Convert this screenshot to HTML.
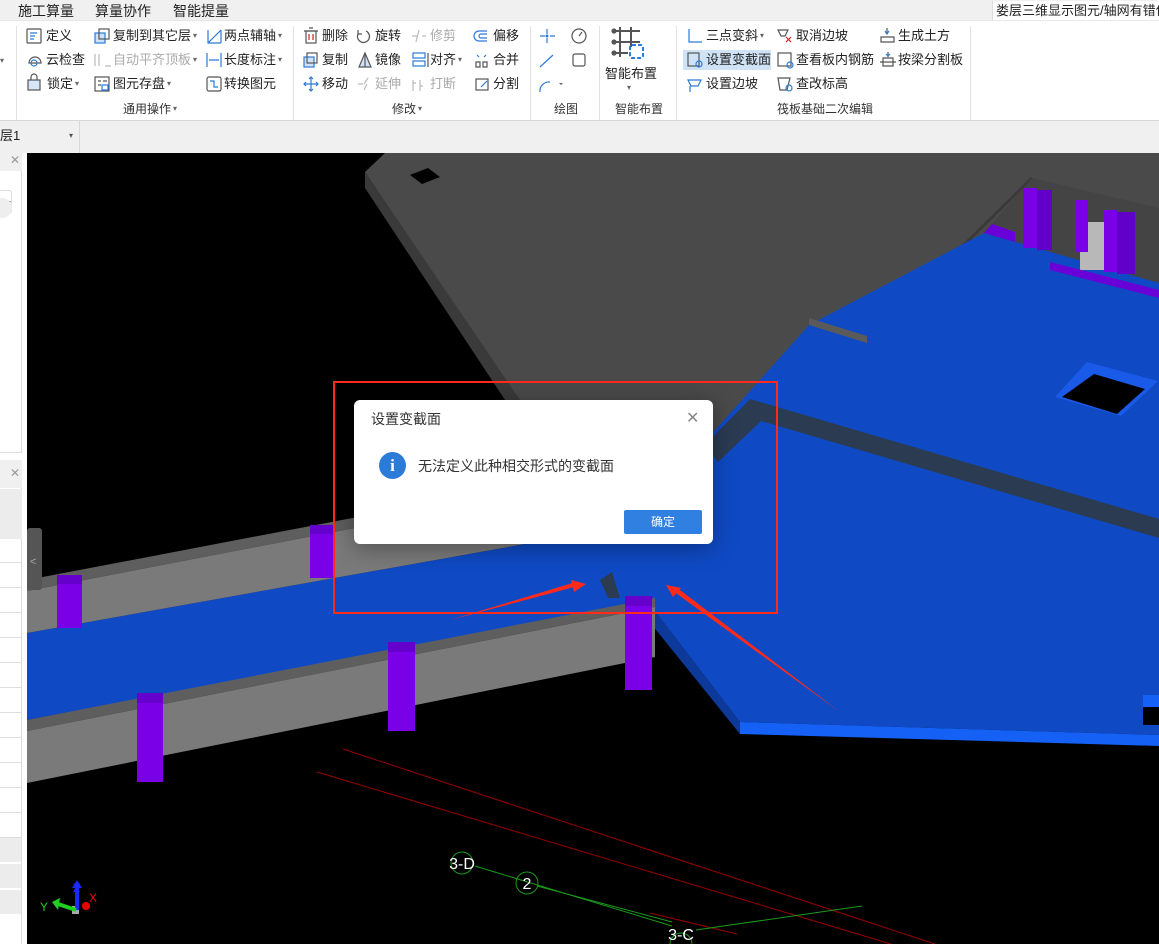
<!DOCTYPE html>
<html style="overflow:hidden"><head><meta charset="utf-8">
<style>
*{margin:0;padding:0;box-sizing:border-box}
html,body{width:1159px;height:944px;overflow:hidden}
body{position:relative;background:#f0f0f0;font-family:"Liberation Sans","Noto Sans CJK SC",sans-serif;color:#222}
.a{position:absolute;white-space:nowrap}
.menu{font-size:14px;top:1px;color:#222}
.rb{position:absolute;left:0;top:20px;width:1159px;height:101px;background:#fff;border-top:1px solid #e8e8e8;border-bottom:1px solid #d8d8d8}
.sep{position:absolute;top:26px;width:1px;height:94px;background:#e2e2e2}
.t{position:absolute;font-size:13px;white-space:nowrap;line-height:16px;color:#222}
.g{color:#aaa}
.gl{position:absolute;top:100px;font-size:12px;color:#333;white-space:nowrap}
.dd{font-size:8px;color:#666;margin-left:2px;vertical-align:2px}
</style></head><body>
<div class="a menu" style="left:18px">施工算量</div>
<div class="a menu" style="left:95px">算量协作</div>
<div class="a menu" style="left:173px">智能提量</div>
<div class="a" style="left:992px;top:1px;height:19px;width:167px;background:#fff;border-left:1px solid #ddd;font-size:13px;padding-left:3px;line-height:19px;overflow:hidden">娄层三维显示图元/轴网有错位,</div>

<div class="rb"></div>
<div class="sep" style="left:16px"></div><div class="sep" style="left:293px"></div><div class="sep" style="left:530px"></div><div class="sep" style="left:599px"></div><div class="sep" style="left:676px"></div><div class="sep" style="left:970px"></div>
<div class="t" style="left:0;top:53px;font-size:8px;color:#666">▾</div>

<svg class="a" style="left:0;top:0" width="1159" height="121">
<g fill="none" stroke="#555" stroke-width="1.2">
<rect x="27" y="29" width="14" height="14" rx="1"/><path d="M30 33h7M30 36h5M30 39h4" stroke="#2a7ad8"/>
<path d="M29 63a6 6 0 0 1 12 0h-12z"/><circle cx="34" cy="63" r="3" stroke="#2a7ad8"/>
<rect x="28" y="80" width="12" height="10" fill="#d6e6fa"/><path d="M31 80v-3a3 3 0 0 1 6 0v3"/>
<rect x="95" y="33" width="10" height="10" fill="#cfe2fa" stroke="#2a7ad8"/><rect x="99" y="29" width="10" height="10"/>
<path d="M95 54v12M99 54v12M105 66h6" stroke="#bbb"/>
<rect x="95" y="77" width="14" height="14"/><path d="M98 81h3M98 85h3M103 81h4" /><rect x="102" y="85" width="6" height="5" stroke="#2a7ad8"/>
<path d="M208 30v13h13M208 43l13-13M221 30v13" stroke="#2a7ad8"/>
<path d="M207 53v14M221 53v14M209 60h10" stroke="#2a7ad8"/>
<rect x="207" y="77" width="14" height="14" rx="2"/><path d="M210 81h4v3M218 87h-4v-3" stroke="#2a7ad8"/>
<rect x="306" y="31" width="10" height="12"/><path d="M304 31h14M309 28h4"/><path d="M309 34v6M313 34v6" stroke="#d02020"/>
<rect x="304" y="57" width="10" height="10" fill="#cfe2fa" stroke="#2a7ad8"/><rect x="307" y="53" width="10" height="10"/>
<path d="M311 77v14M304 84h14M309 79l2-2 2 2M309 89l2 2 2-2M306 82l-2 2 2 2M316 82l2 2-2 2" stroke="#2a7ad8"/>
<path d="M366 31a6 6 0 1 1-8 3M358 30v4h4"/>
<path d="M365 53l-6 14h12z" fill="#cfe2fa"/><path d="M365 53v14"/>
<path d="M358 84h5M364 84l4-6M364 90l3-6" stroke="#bbb"/>
<path d="M412 36h5M419 30l-3 12M422 36h4" stroke="#bbb"/>
<rect x="413" y="53" width="12" height="5" stroke="#2a7ad8"/><rect x="413" y="61" width="12" height="5" stroke="#2a7ad8"/><path d="M428 53v14"/>
<path d="M413 80v11M420 80v11M413 83h3M420 86h3" stroke="#bbb"/>
<path d="M487 31h-8a5 5 0 0 0 0 10h8M487 34h-6a2 2 0 0 0 0 4h6" stroke="#2a7ad8"/>
<path d="M476 62v5h4v-5zM483 62v5h4v-5z"/><path d="M477 55l2 2M486 55l-2 2" stroke="#2a7ad8"/>
<rect x="476" y="79" width="12" height="11"/><path d="M481 87l6-6" stroke="#2a7ad8"/>
<path d="M540 36h5M550 36h5M547 29v5M547 38v5" stroke="#2a7ad8"/><circle cx="547" cy="36" r="1.5" fill="#2a7ad8" stroke="none"/>
<circle cx="579" cy="36" r="7"/><path d="M579 36l3-4"/>
<path d="M540 67l13-12" stroke="#2a7ad8"/>
<rect x="573" y="54" width="12" height="12" rx="2"/>
<path d="M540 92a9 9 0 0 1 10-10" stroke="#2a7ad8"/><path d="M559 83l2 2 2-2" stroke="none" fill="#666"/>
<path d="M614 31h26M614 42h26M614 53h14M620 27v30M631 27v20" stroke="#555" stroke-width="2"/>
<circle cx="614" cy="31" r="2" fill="#555"/><circle cx="614" cy="42" r="2" fill="#555"/><circle cx="614" cy="53" r="2" fill="#555"/>
<rect x="630" y="45" width="13" height="13" rx="2" stroke="#2a7ad8" stroke-width="2" stroke-dasharray="4 2"/>
<path d="M689 29v13h13" stroke="#2a7ad8"/>
<rect x="683" y="50" width="88" height="20" fill="#cfe2f6" stroke="none"/>
<rect x="688" y="53" width="11" height="13"/><circle cx="699" cy="64" r="3" stroke="#2a7ad8"/>
<path d="M688 80h13l-3 6h-7zM690 86v6" stroke="#2a7ad8"/>
<path d="M778 30h10l-3 6h-4z"/><path d="M786 37l5 5M791 37l-5 5" stroke="#d02020"/>
<rect x="778" y="53" width="13" height="13"/><circle cx="790" cy="65" r="3" stroke="#2a7ad8"/>
<path d="M778 78h12l-3 12h-7z"/><circle cx="789" cy="88" r="3" stroke="#2a7ad8"/>
<path d="M881 37h13v5h-13zM887 28v6" /><path d="M885 31l2 3 2-3" stroke="#2a7ad8"/>
<path d="M883 58h10v8h-10zM880 62h16M888 52v5" /><path d="M886 54l2 2 2-2" stroke="#2a7ad8"/>
</g>
</svg>

<div class="t" style="left:46px;top:28px">定义</div>
<div class="t" style="left:46px;top:52px">云检查</div>
<div class="t" style="left:47px;top:76px">锁定<span class="dd">▾</span></div>
<div class="t" style="left:113px;top:28px">复制到其它层<span class="dd">▾</span></div>
<div class="t g" style="left:113px;top:52px">自动平齐顶板<span class="dd">▾</span></div>
<div class="t" style="left:113px;top:76px">图元存盘<span class="dd">▾</span></div>
<div class="t" style="left:224px;top:28px">两点辅轴<span class="dd">▾</span></div>
<div class="t" style="left:224px;top:52px">长度标注<span class="dd">▾</span></div>
<div class="t" style="left:224px;top:76px">转换图元</div>
<div class="t" style="left:322px;top:28px">删除</div>
<div class="t" style="left:322px;top:52px">复制</div>
<div class="t" style="left:322px;top:76px">移动</div>
<div class="t" style="left:375px;top:28px">旋转</div>
<div class="t" style="left:375px;top:52px">镜像</div>
<div class="t g" style="left:375px;top:76px">延伸</div>
<div class="t g" style="left:430px;top:28px">修剪</div>
<div class="t" style="left:430px;top:52px">对齐<span class="dd">▾</span></div>
<div class="t g" style="left:430px;top:76px">打断</div>
<div class="t" style="left:493px;top:28px">偏移</div>
<div class="t" style="left:493px;top:52px">合并</div>
<div class="t" style="left:493px;top:76px">分割</div>
<div class="t" style="left:605px;top:66px">智能布置</div>
<div class="t" style="left:627px;top:80px;font-size:8px;color:#666">▾</div>
<div class="t" style="left:706px;top:28px">三点变斜<span class="dd">▾</span></div>
<div class="t" style="left:706px;top:52px">设置变截面</div>
<div class="t" style="left:706px;top:76px">设置边坡</div>
<div class="t" style="left:796px;top:28px">取消边坡</div>
<div class="t" style="left:796px;top:52px">查看板内钢筋</div>
<div class="t" style="left:796px;top:76px">查改标高</div>
<div class="t" style="left:898px;top:28px">生成土方</div>
<div class="t" style="left:898px;top:52px">按梁分割板</div>
<div class="gl" style="left:123px">通用操作<span class="dd">▾</span></div>
<div class="gl" style="left:392px">修改<span class="dd">▾</span></div>
<div class="gl" style="left:554px">绘图</div>
<div class="gl" style="left:615px">智能布置</div>
<div class="gl" style="left:777px">筏板基础二次编辑</div>

<div class="a" style="left:0;top:121px;width:80px;height:32px;border-right:1px solid #d8d8d8;font-size:13px;line-height:30px">层1<span style="position:absolute;left:69px;top:0;font-size:8px;color:#555">▾</span></div>

<div class="a" style="left:0;top:153px;width:27px;height:791px;background:#fff;overflow:hidden">
<div class="a" style="left:0;top:0;width:22px;height:300px;border-right:1px solid #ddd;border-bottom:1px solid #ddd"></div>
<div class="a" style="left:0;top:0;width:22px;height:18px;background:#f0f0f0;font-size:12px;color:#999;text-align:right;padding-right:2px">✕</div>
<div class="a" style="left:-5px;top:37px;width:17px;height:24px;border:1px solid #ddd;border-radius:3px;font-size:8px;line-height:22px;text-align:right">▸</div>
<div class="a" style="left:-8px;top:45px;width:20px;height:20px;border-radius:10px;background:#eee"></div>
<div class="a" style="left:0;top:307px;width:22px;height:484px;border-right:1px solid #ddd"></div>
<div class="a" style="left:0;top:307px;width:22px;height:28px;background:#f0f0f0;font-size:12px;color:#999;text-align:right;padding:6px 2px 0 0">✕</div>
<div class="a" style="left:0;top:336px;width:22px;height:50px;background:#ececec"></div>
<div class="a" style="left:0;top:387px;width:21px;height:298px;background:repeating-linear-gradient(#fff 0 22px,#ddd 22px 23px,#fff 23px 25px)"></div>
<div class="a" style="left:0;top:685px;width:21px;height:77px;background:repeating-linear-gradient(#ececec 0 24px,#fff 24px 26px)"></div>
</div>

<svg class="a" style="left:0;top:0" width="1159" height="944">
<rect x="27" y="153" width="1132" height="791" fill="#000"/>
<polygon points="365,172 385,153 1159,153 1159,600 625,560" fill="#4a4a4a"/>
<polygon points="365,172 365,188 612,562 622,550" fill="#3a3a3a"/>
<polygon points="410,175 428,168 440,177 422,184" fill="#000"/>
<line x1="867" y1="340" x2="1032" y2="178" stroke="#3a3a3a" stroke-width="3"/>
<polygon points="1032,178 1159,208 1159,290 984,233" fill="#444"/>
<polygon points="984,233 1159,283 1159,735 740,722 608,550 809,325" fill="#0f4ac4"/>
<polygon points="809,318 867,336 867,343 809,325" fill="#5a5a5a"/>
<polygon points="740,722 1159,735 1159,746 740,734" fill="#1560f5"/>
<polygon points="608,550 740,722 740,734 598,558" fill="#0d3a9a"/>
<polygon points="750,399 1159,519 1159,538 761,421 718,462 705,445" fill="#2b3b52"/>
<polygon points="1087,362 1158,381 1121,416 1055,397" fill="#1a5ae8"/>
<polygon points="1094,374 1145,389 1117,414 1062,397" fill="#000"/>
<rect x="1143" y="695" width="16" height="12" fill="#1560f5"/><rect x="1143" y="707" width="16" height="18" fill="#000"/>
<polygon points="984,233 992,224 1015,232 1015,242" fill="#6a00d8"/>
<rect x="1023" y="188" width="14" height="60" fill="#7a00e8"/><rect x="1037" y="190" width="15" height="60" fill="#6000c8"/>
<rect x="1080" y="222" width="35" height="48" fill="#b8b8b8"/>
<rect x="1076" y="200" width="12" height="52" fill="#7a00e8"/>
<rect x="1104" y="210" width="13" height="62" fill="#7a00e8"/><rect x="1117" y="212" width="18" height="62" fill="#6000c8"/>
<polygon points="1050,262 1159,290 1159,298 1050,270" fill="#6a00d8"/>
<polygon points="27,633 620,527 660,600 27,720" fill="#0f4ac4"/>
<polygon points="27,580 620,467 620,477 27,591" fill="#5e5e5e"/>
<polygon points="27,591 620,477 620,527 27,633" fill="#7a7a7a"/>
<polygon points="27,720 655,598 655,607 27,731" fill="#5e5e5e"/>
<polygon points="27,731 655,607 655,657 27,783" fill="#7a7a7a"/>
<polygon points="600,580 612,572 620,598 608,598" fill="#2b3b52"/>
<rect x="57" y="575" width="25" height="53" fill="#7a00e8"/><rect x="57" y="575" width="25" height="9" fill="#6500cc"/>
<rect x="310" y="525" width="23" height="53" fill="#7a00e8"/><rect x="310" y="525" width="23" height="9" fill="#6500cc"/>
<rect x="137" y="693" width="26" height="89" fill="#7a00e8"/><rect x="137" y="693" width="26" height="10" fill="#6500cc"/>
<rect x="388" y="642" width="27" height="89" fill="#7a00e8"/><rect x="388" y="642" width="27" height="10" fill="#6500cc"/>
<rect x="625" y="596" width="27" height="94" fill="#7a00e8"/><rect x="625" y="596" width="27" height="10" fill="#6500cc"/>
<rect x="27" y="528" width="15" height="62" rx="3" fill="#555"/><text x="30" y="565" fill="#aaa" font-size="11" font-family="Liberation Sans">&lt;</text>
<g stroke="#9a0000" stroke-width="1">
<line x1="343" y1="749" x2="935" y2="944"/><line x1="317" y1="772" x2="891" y2="944"/><line x1="650" y1="913" x2="737" y2="934"/>
</g>
<g stroke="#1a9a1a" stroke-width="1" fill="none">
<line x1="475" y1="866" x2="672" y2="926"/><line x1="537" y1="886" x2="672" y2="922"/><line x1="696" y1="930" x2="862" y2="906"/>
<circle cx="462" cy="863" r="11"/><circle cx="527" cy="883" r="11"/><path d="M670 944a11 11 0 0 1 22 0"/>
</g>
<g fill="#fff" font-size="16" font-family="Liberation Sans" text-anchor="middle">
<text x="462" y="869">3-D</text><text x="527" y="889">2</text><text x="681" y="940">3-C</text>
</g>
<rect x="72" y="906" width="7" height="8" fill="#aaa"/>
<path d="M77 910V885" stroke="#1a2aff" stroke-width="4"/><polygon points="72,888 77,880 82,888" fill="#1a2aff"/>
<path d="M76 910L58 904" stroke="#20d020" stroke-width="4"/><polygon points="60,898 52,902 58,910" fill="#20d020"/>
<circle cx="86" cy="906" r="4" fill="#e00"/>
<text x="73" y="892" fill="#1a2aff" font-size="12" font-family="Liberation Sans">Z</text>
<text x="89" y="902" fill="#e00" font-size="12" font-family="Liberation Sans">X</text>
<text x="40" y="911" fill="#20d020" font-size="12" font-family="Liberation Sans">Y</text>
<rect x="334" y="382" width="443" height="231" fill="none" stroke="#ff2a1a" stroke-width="2"/>
<polygon points="450,620 578,586 576,582" fill="#ff2a1a"/><polygon points="586,584 571,580 574,592" fill="#ff2a1a"/>
<polygon points="840,712 673,591 676,587" fill="#ff2a1a"/><polygon points="666,585 681,588 673,597" fill="#ff2a1a"/>
</svg>

<div class="a" style="left:354px;top:400px;width:359px;height:144px;background:#fff;border-radius:6px;box-shadow:0 4px 24px rgba(0,0,0,.35)">
<div class="a" style="left:17px;top:9px;font-size:14px;color:#333">设置变截面</div>
<div class="a" style="left:332px;top:8px;font-size:16px;color:#888">✕</div>
<div class="a" style="left:25px;top:52px;width:27px;height:27px;border-radius:50%;background:#2b7bd8;color:#fff;font-weight:bold;font-size:17px;text-align:center;line-height:27px;font-family:'Liberation Serif',serif">i</div>
<div class="a" style="left:64px;top:56px;font-size:14px;color:#333">无法定义此种相交形式的变截面</div>
<div class="a" style="left:270px;top:110px;width:78px;height:24px;background:#2f80e0;border-radius:2px;color:#fff;font-size:12px;text-align:center;line-height:24px">确定</div>
</div>
</body></html>
